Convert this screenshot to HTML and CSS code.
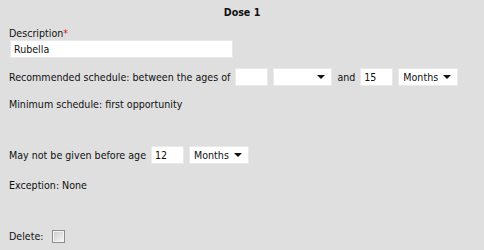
FILE: index.html
```html
<!DOCTYPE html>
<html>
<head>
	<meta name="viewport" content="width=device-width, initial-scale=1.0">
	<link rel="stylesheet" href="styles.css">
</head>
<body>
	<div class="dose">
		<div class="title">Dose 1</div>

		<div class="label">Description<span class="req">*</span></div>
		<input class="field desc" type="text" value="Rubella">

		<div class="row sched">
			<span>Recommended schedule: between the ages of</span>
			<input class="field num" type="text" value="">
			<span class="select wide"><span class="val"></span></span>
			<span>and</span>
			<input class="field num" type="text" value="15">
			<span class="select"><span class="val">Months</span></span>
		</div>

		<div class="text minimum">Minimum schedule: first opportunity</div>

		<div class="row before">
			<span>May not be given before age</span>
			<input class="field num" type="text" value="12">
			<span class="select"><span class="val">Months</span></span>
		</div>

		<div class="text exception">Exception: None</div>

		<div class="row delete">
			<span>Delete:</span>
			<input class="check" type="checkbox">
		</div>
	</div>
</body>
</html>
```

FILE: styles.css
```css
:root {
	--bg: #dfdfdf;
	--ink: #111;
	--field-border: #e9e9e9;
}

body {
	margin: 0;
	background: var(--bg);
	color: var(--ink);
	font-family: "DejaVu Sans Condensed", "DejaVu Sans", sans-serif;
	font-stretch: condensed;
	font-size: 10.6px;
}

.dose {
	width: 484px;
	height: 250px;
	padding: 0 9px;
	box-sizing: border-box;
}

.title {
	height: 24px;
	line-height: 24px;
	text-align: center;
	font-weight: bold;
}

.label {
	margin-top: 2px;
	line-height: 14px;
}

.req { color: #d32020; }

.field {
	box-sizing: border-box;
	height: 18px;
	margin: 0;
	padding: 0 3px;
	border: 1px solid var(--field-border);
	background: #fff;
	color: var(--ink);
	font: inherit;
	outline: none;
}

.desc {
	display: block;
	width: 223px;
	margin-left: 1px;
}

.num { width: 33px; }

.row {
	display: flex;
	align-items: center;
	gap: 5px;
	height: 18px;
}

.sched { margin-top: 10px; }
.before { margin-top: 35px; }
.delete { margin-top: 35px; gap: 8px; }

.text { line-height: 14px; }
.minimum { margin-top: 11px; }
.exception { margin-top: 14px; }

.select {
	position: relative;
	box-sizing: border-box;
	height: 18px;
	width: 60px;
	padding: 0 4px;
	border: 1px solid var(--field-border);
	background: #fff;
	line-height: 16px;
}

.select.wide { width: 59px; }

.select::after {
	content: "";
	position: absolute;
	right: 6px;
	top: 6px;
	border-left: 4px solid transparent;
	border-right: 4px solid transparent;
	border-top: 4px solid #111;
}

.check {
	-webkit-appearance: none;
	appearance: none;
	box-sizing: border-box;
	width: 13px;
	height: 13px;
	margin: 0;
	border: 1px solid #8d8d8d;
	box-shadow: inset 0 0 0 1px #f4f4f4;
	background: linear-gradient(135deg, #c9c9c9, #f8f8f8);
}
```
